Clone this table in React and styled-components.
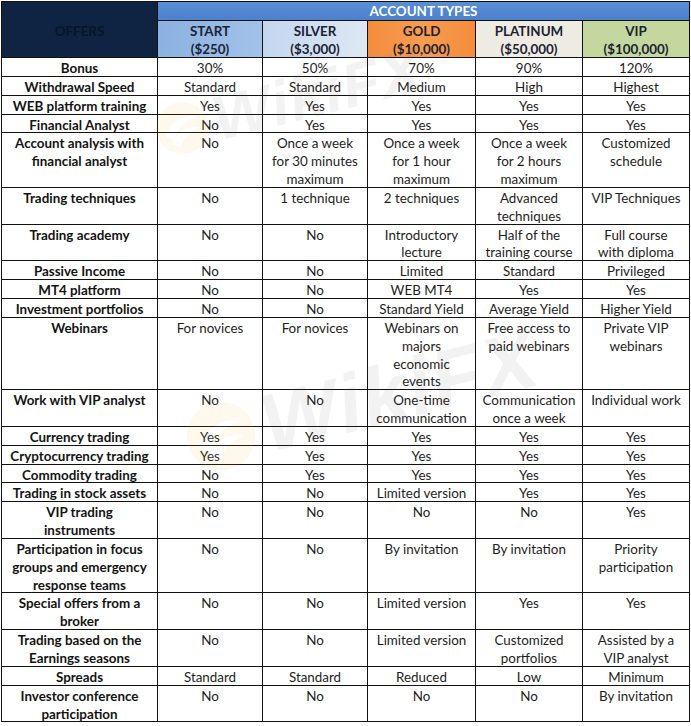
import React from "react";
import styled, { createGlobalStyle } from "styled-components";

const GlobalStyle = createGlobalStyle`
  html, body { margin: 0; padding: 0; background: #ffffff; }
  body { font-family: Lato, "Open Sans", "Liberation Sans", sans-serif; }
`;

const Page = styled.div`
  position: relative;
  padding: 1px 0 0 1px;
  width: 691px;
`;

const Table = styled.div`
  display: grid;
  grid-template-columns: 155px 104px 104px 107px 106px 106px;
  gap: 1px;
  padding: 1px;
  width: max-content;
  background: #111111;
  font-size: 13.4px;
  line-height: 17.85px;
  color: #1e1e1e;
`;

const OffersCell = styled.div`
  grid-row: span 2;
  background: #0f2443;
  color: #07142a;
  font-weight: 700;
  display: flex;
  align-items: center;
  justify-content: center;
  padding-top: 4px;
`;

const TypesBar = styled.div`
  grid-column: span 5;
  background: linear-gradient(#5a8fd6, #4b80cc);
  color: #ffffff;
  font-weight: 700;
  text-align: center;
  height: 18px;
  line-height: 19px;
`;

const tierColors = {
  start: "linear-gradient(100deg, #8ab1e1, #a3c2ea)",
  silver: "linear-gradient(100deg, #c3d6ef, #dfe8f4)",
  gold: "linear-gradient(90deg, #f38d3c, #f89c50 50%, #f38d3c)",
  platinum: "#eeece2",
  vip: "#c4d79e",
};

const TierHead = styled.div`
  background: ${(p) => tierColors[p.$tier]};
  color: #1b2233;
  font-weight: 700;
  text-align: center;
  white-space: pre-line;
  height: 34px;
  padding-top: 2px;
`;

/* text sits ~2px lower in the cell, like the spreadsheet it came from */
const Cell = styled.div`
  background: #ffffff;
  text-align: center;
  white-space: pre-line;
  padding-top: 2px;
  font-weight: ${(p) => (p.$head ? 700 : 400)};
  color: ${(p) => (p.$head ? "#141414" : "#1e1e1e")};
`;

const CellText = styled.span`
  display: block;
  margin-bottom: -2px;
`;

const Watermark = styled.div`
  position: absolute;
  left: ${(p) => p.$x}px;
  top: ${(p) => p.$y}px;
  display: flex;
  align-items: center;
  gap: 6px;
  pointer-events: none;
  transform: rotate(-14deg) scale(${(p) => p.$scale});
  transform-origin: left center;
  opacity: 0.07;
`;

const MarkText = styled.span`
  font-family: "Liberation Sans", sans-serif;
  font-weight: 700;
  font-style: italic;
  font-size: 86px;
  letter-spacing: 2px;
  color: #555555;
`;

const tiers = [
  ["start", "START\n($250)"],
  ["silver", "SILVER\n($3,000)"],
  ["gold", "GOLD\n($10,000)"],
  ["platinum", "PLATINUM\n($50,000)"],
  ["vip", "VIP\n($100,000)"],
];

const rows = [
  ["Bonus", "30%", "50%", "70%", "90%", "120%"],
  ["Withdrawal Speed", "Standard", "Standard", "Medium", "High", "Highest"],
  ["WEB platform training", "Yes", "Yes", "Yes", "Yes", "Yes"],
  ["Financial Analyst", "No", "Yes", "Yes", "Yes", "Yes"],
  [
    "Account analysis with\nfinancial analyst",
    "No",
    "Once a week\nfor 30 minutes\nmaximum",
    "Once a week\nfor 1 hour\nmaximum",
    "Once a week\nfor 2 hours\nmaximum",
    "Customized\nschedule",
  ],
  ["Trading techniques", "No", "1 technique", "2 techniques", "Advanced\ntechniques", "VIP Techniques"],
  ["Trading academy", "No", "No", "Introductory\nlecture", "Half of the\ntraining course", "Full course\nwith diploma"],
  ["Passive Income", "No", "No", "Limited", "Standard", "Privileged"],
  ["MT4 platform", "No", "No", "WEB MT4", "Yes", "Yes"],
  ["Investment portfolios", "No", "No", "Standard Yield", "Average Yield", "Higher Yield"],
  [
    "Webinars",
    "For novices",
    "For novices",
    "Webinars on\nmajors\neconomic\nevents",
    "Free access to\npaid webinars",
    "Private VIP\nwebinars",
  ],
  ["Work with VIP analyst", "No", "No", "One-time\ncommunication", "Communication\nonce a week", "Individual work"],
  ["Currency trading", "Yes", "Yes", "Yes", "Yes", "Yes"],
  ["Cryptocurrency trading", "Yes", "Yes", "Yes", "Yes", "Yes"],
  ["Commodity trading", "No", "Yes", "Yes", "Yes", "Yes"],
  ["Trading in stock assets", "No", "No", "Limited version", "Yes", "Yes"],
  ["VIP trading\ninstruments", "No", "No", "No", "No", "Yes"],
  [
    "Participation in focus\ngroups and emergency\nresponse teams",
    "No",
    "No",
    "By invitation",
    "By invitation",
    "Priority\nparticipation",
  ],
  ["Special offers from a\nbroker", "No", "No", "Limited version", "Yes", "Yes"],
  [
    "Trading based on the\nEarnings seasons",
    "No",
    "No",
    "Limited version",
    "Customized\nportfolios",
    "Assisted by a\nVIP analyst",
  ],
  ["Spreads", "Standard", "Standard", "Reduced", "Low", "Minimum"],
  ["Investor conference\nparticipation", "No", "No", "No", "No", "By invitation"],
];

function Logo() {
  return (
    <svg width="78" height="78" viewBox="0 0 78 78">
      <circle cx="39" cy="39" r="36" fill="#f5b800" />
      <path d="M14 46 C26 24 50 20 66 30 C52 28 34 34 24 52 Z" fill="#ffffff" />
      <path d="M20 58 C32 40 52 38 62 44 C50 46 38 52 30 64 Z" fill="#ffffff" />
    </svg>
  );
}

export default function App() {
  return (
    <Page>
      <GlobalStyle />
      <Table>
        <OffersCell>OFFERS</OffersCell>
        <TypesBar>ACCOUNT TYPES</TypesBar>
        {tiers.map(([key, title]) => (
          <TierHead key={key} $tier={key}>
            {title}
          </TierHead>
        ))}
        {rows.map(([label, ...values]) => (
          <React.Fragment key={label}>
            <Cell $head>
              <CellText>{label}</CellText>
            </Cell>
            {values.map((v, i) => (
              <Cell key={i}>
                <CellText>{v}</CellText>
              </Cell>
            ))}
          </React.Fragment>
        ))}
      </Table>
      <Watermark $x={155} $y={85} $scale={0.72}>
        <Logo />
        <MarkText>WikiFX</MarkText>
      </Watermark>
      <Watermark $x={185} $y={395} $scale={0.95}>
        <Logo />
        <MarkText>WikiFX</MarkText>
      </Watermark>
    </Page>
  );
}
